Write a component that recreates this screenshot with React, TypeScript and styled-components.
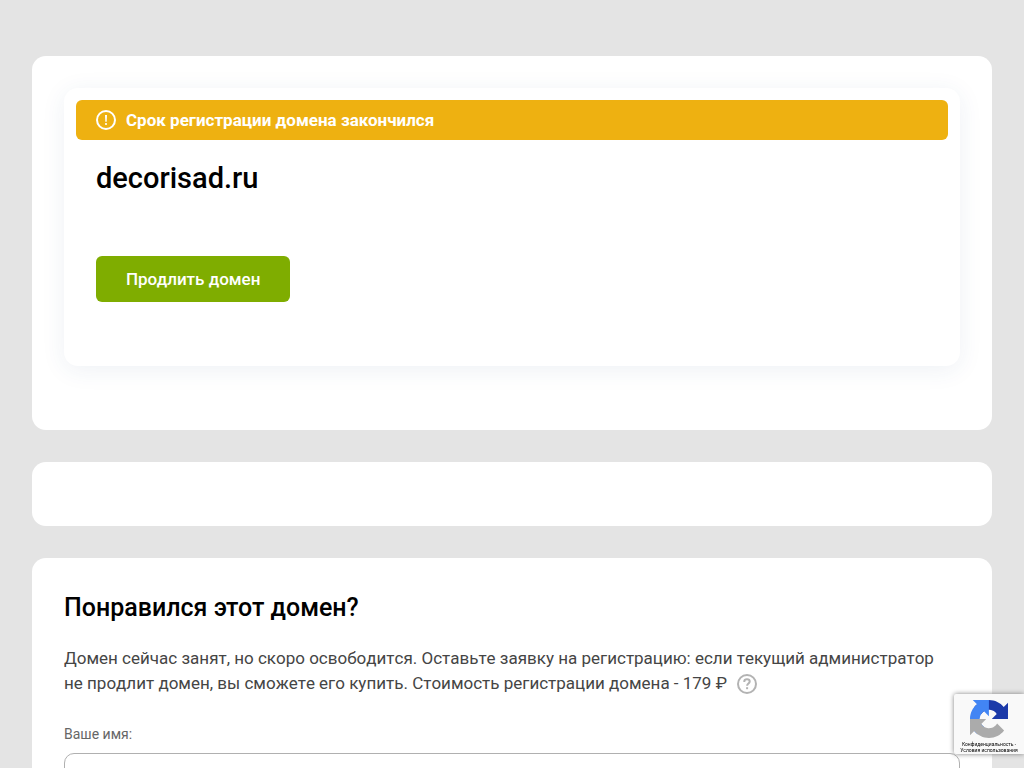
import React from "react";
import styled, { createGlobalStyle } from "styled-components";

const GlobalStyle = createGlobalStyle`
  *, *::before, *::after { box-sizing: border-box; }
  body {
    margin: 0;
    background: #e4e4e4;
    color: #000;
    font-family: Roboto, "Liberation Sans", sans-serif;
    font-size: 17px;
    line-height: 25px;
  }
`;

const Page = styled.main`
  display: flex;
  flex-direction: column;
  gap: 32px;
  padding: 56px 32px;
`;

const Panel = styled.section<{ $bottom?: number }>`
  padding: 32px 32px ${(p) => p.$bottom ?? 32}px;
  border-radius: 14px;
  background: #fff;
`;

const DomainCard = styled.div`
  padding: 12px 12px 64px;
  border-radius: 14px;
  box-shadow: 0 4px 24px rgba(40, 80, 130, 0.08);
`;

const Notice = styled.div`
  display: flex;
  align-items: center;
  gap: 10px;
  height: 40px;
  padding: 0 20px;
  border-radius: 6px;
  background: #eeb111;
  color: #fff;
  font-weight: 700;
`;

const CardBody = styled.div`
  display: flex;
  flex-direction: column;
  align-items: flex-start;
  gap: 60px;
  padding: 20px 20px 0;
`;

const DomainName = styled.h1`
  margin: 0;
  font-size: 29px;
  line-height: 36px;
  font-weight: 500;
`;

const RenewButton = styled.button`
  height: 46px;
  padding: 0 30px;
  border: 0;
  border-radius: 6px;
  background: #7fad00;
  color: #fff;
  font: inherit;
  font-weight: 500;
  cursor: pointer;
`;

const Title = styled.h2`
  margin: 0 0 20px;
  font-size: 25px;
  line-height: 36px;
  font-weight: 500;
`;

const Lead = styled.p`
  margin: 0 0 28px;
  padding-right: 12px;
  color: #454545;
  font-kerning: none;
`;

const HelpButton = styled.button`
  display: inline-flex;
  width: 20px;
  height: 20px;
  margin: 0 0 2px 6px;
  padding: 0;
  border: 0;
  background: none;
  vertical-align: middle;
  cursor: pointer;
`;

const Field = styled.div`
  display: flex;
  flex-direction: column;
  gap: 9px;
`;

const Label = styled.label`
  color: #666;
  font-size: 14px;
  line-height: 20px;
`;

const TextInput = styled.input`
  width: 100%;
  height: 46px;
  padding: 0 16px;
  border: 1px solid #b0b0b0;
  border-radius: 10px;
  background: #fff;
  font: inherit;
`;

const Badge = styled.aside`
  position: fixed;
  right: 0;
  bottom: 14px;
  display: flex;
  flex-direction: column;
  align-items: center;
  width: 70px;
  height: 60px;
  padding-top: 6px;
  border-radius: 2px 0 0 2px;
  background: #f9f9f9;
  box-shadow: 0 0 5px gray;
`;

const BadgeLinks = styled.div`
  margin-top: 3px;
  color: #000;
  font-size: 5px;
  line-height: 6px;
  text-align: center;
  white-space: nowrap;
`;

const BadgeLink = styled.a`
  color: inherit;
  text-decoration: none;
`;

const WarningIcon = () => (
  <svg width="20" height="20" viewBox="0 0 20 20" fill="none" aria-hidden="true">
    <circle cx="10" cy="10" r="9" stroke="#fff" strokeWidth="2" />
    <path d="M9 5h2l-.3 6.8H9.3z" fill="#fff" />
    <circle cx="10" cy="14" r="1.1" fill="#fff" />
  </svg>
);

const QuestionIcon = () => (
  <svg width="20" height="20" viewBox="0 0 20 20" fill="none" aria-hidden="true">
    <circle cx="10" cy="10" r="9" stroke="#b3b3b3" strokeWidth="2" />
    <path
      d="M7.3 8V7.6C7.3 6.2 8.4 5.3 10 5.3s2.7.9 2.7 2.3c0 1.9-2.6 2.1-2.6 4.2"
      stroke="#b3b3b3"
      strokeWidth="2"
    />
    <path d="M9.1 13.2h2v2h-2z" fill="#b3b3b3" />
  </svg>
);

const CaptchaLogo = () => (
  <svg width="38" height="38" viewBox="0 0 64 64" role="img" aria-label="reCAPTCHA">
    <path
      fill="#1c3aa9"
      d="M64 31.955l-.033-1.37V4.687l-7.16 7.16C50.948 4.674 42.033.093 32.05.093c-10.4 0-19.622 4.96-25.458 12.64l11.736 11.86a15.55 15.55 0 0 1 4.754-5.334c2.05-1.6 4.952-2.906 8.968-2.906.485 0 .86.057 1.135.163 4.976.393 9.288 3.14 11.828 7.124l-8.307 8.307L64 31.953"
    />
    <path
      fill="#4285f4"
      d="M31.862.094l-1.37.033H4.594l7.16 7.16C4.58 13.147 0 22.06 0 32.046c0 10.4 4.96 19.622 12.64 25.458L24.5 45.768a15.55 15.55 0 0 1-5.334-4.754c-1.6-2.05-2.906-4.952-2.906-8.968 0-.485.057-.86.163-1.135.393-4.976 3.14-9.288 7.124-11.828l8.307 8.307L31.86.095"
    />
    <path
      fill="#ababab"
      d="M.001 32.045l.033 1.37v25.898l7.16-7.16c5.86 7.173 14.774 11.754 24.76 11.754 10.4 0 19.622-4.96 25.458-12.64l-11.736-11.86a15.55 15.55 0 0 1-4.754 5.334c-2.05 1.6-4.952 2.906-8.968 2.906-.485 0-.86-.057-1.135-.163-4.976-.393-9.288-3.14-11.828-7.124l8.307-8.307c-10.522.04-22.4.066-27.295-.005"
    />
  </svg>
);

export default function App() {
  return (
    <>
      <GlobalStyle />
      <Page>
        <Panel $bottom={64}>
          <DomainCard>
            <Notice role="status">
              <WarningIcon />
              Срок регистрации домена закончился
            </Notice>
            <CardBody>
              <DomainName>decorisad.ru</DomainName>
              <RenewButton type="button">Продлить домен</RenewButton>
            </CardBody>
          </DomainCard>
        </Panel>
        <Panel />
        <Panel>
          <Title>Понравился этот домен?</Title>
          <Lead>
            Домен сейчас занят, но скоро освободится. Оставьте заявку на регистрацию: если текущий
            администратор не продлит домен, вы сможете его купить. Стоимость регистрации домена -
            179&nbsp;₽{" "}
            <HelpButton type="button" aria-label="Подробнее о стоимости">
              <QuestionIcon />
            </HelpButton>
          </Lead>
          <Field>
            <Label htmlFor="name">Ваше имя:</Label>
            <TextInput id="name" name="name" type="text" />
          </Field>
        </Panel>
      </Page>
      <Badge>
        <CaptchaLogo />
        <BadgeLinks>
          <BadgeLink href="#privacy">Конфиденциальность</BadgeLink> -
          <br />
          <BadgeLink href="#terms">Условия использования</BadgeLink>
        </BadgeLinks>
      </Badge>
    </>
  );
}
